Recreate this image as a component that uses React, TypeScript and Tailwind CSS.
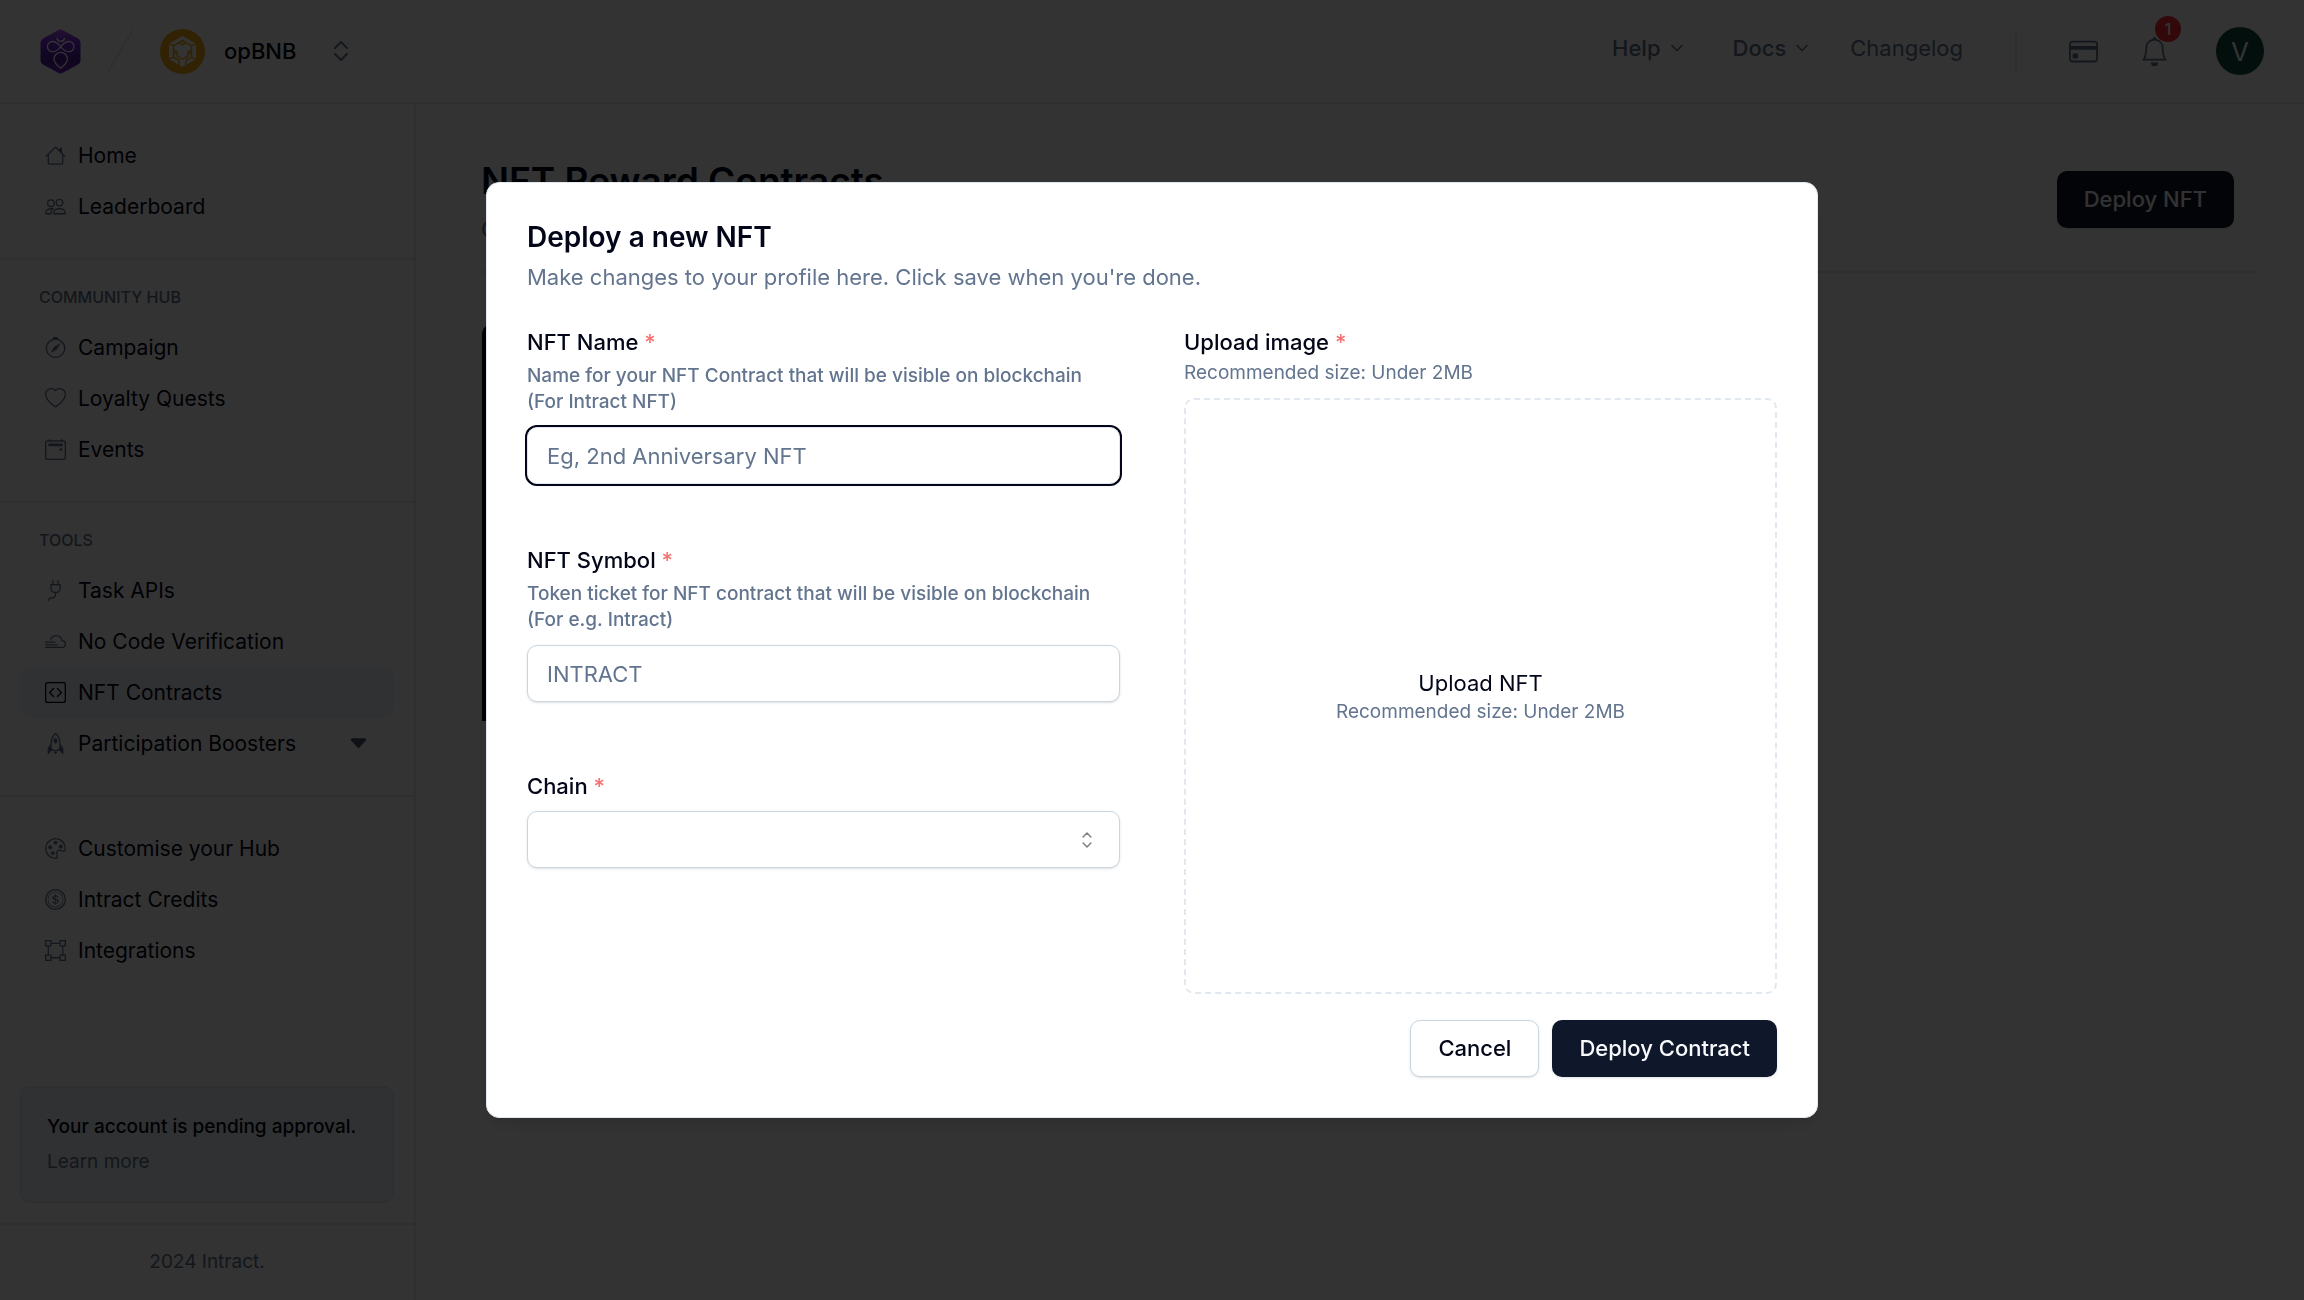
import type { ReactNode } from "react";
import { ChevronDown } from "lucide-react";
import {
  BsBell,
  BsBoundingBox,
  BsCalendar2Event,
  BsCaretDownFill,
  BsCloudFog2,
  BsCodeSquare,
  BsCoin,
  BsCompass,
  BsCreditCard,
  BsHeart,
  BsHouse,
  BsPalette,
  BsPeople,
  BsPlug,
  BsRocket,
} from "react-icons/bs";
import type { IconType } from "react-icons";

type NavItem = { label: string; icon: IconType; active?: boolean; expandable?: boolean };

const NAV_SECTIONS: { title?: string; items: NavItem[] }[] = [
  {
    items: [
      { label: "Home", icon: BsHouse },
      { label: "Leaderboard", icon: BsPeople },
    ],
  },
  {
    title: "Community Hub",
    items: [
      { label: "Campaign", icon: BsCompass },
      { label: "Loyalty Quests", icon: BsHeart },
      { label: "Events", icon: BsCalendar2Event },
    ],
  },
  {
    title: "Tools",
    items: [
      { label: "Task APIs", icon: BsPlug },
      { label: "No Code Verification", icon: BsCloudFog2 },
      { label: "NFT Contracts", icon: BsCodeSquare, active: true },
      { label: "Participation Boosters", icon: BsRocket, expandable: true },
    ],
  },
  {
    items: [
      { label: "Customise your Hub", icon: BsPalette },
      { label: "Intract Credits", icon: BsCoin },
      { label: "Integrations", icon: BsBoundingBox },
    ],
  },
];

function IntractLogo() {
  return (
    <svg width="41" height="45" viewBox="0 0 41 45" fill="none">
      <defs>
        <linearGradient id="hex" x1="20" y1="0" x2="20" y2="45" gradientUnits="userSpaceOnUse">
          <stop stopColor="#a855f7" />
          <stop offset="0.35" stopColor="#6d28d9" />
          <stop offset="0.7" stopColor="#4c1d95" />
          <stop offset="1" stopColor="#7e22ce" />
        </linearGradient>
      </defs>
      <path
        d="M18 1.2a5 5 0 0 1 5 0l15 8.3a5 5 0 0 1 2.5 4.3v17.4a5 5 0 0 1-2.5 4.3l-15 8.3a5 5 0 0 1-5 0l-15-8.3A5 5 0 0 1 .5 31.2V13.8A5 5 0 0 1 3 9.5z"
        fill="url(#hex)"
      />
      <g stroke="#fff" strokeWidth="1.3" strokeLinecap="round" strokeLinejoin="round">
        <path d="M17 9.5c1 3.8 6.5 3.8 7.5 0" />
        <path d="M20.7 17.8c-2.5-3.2-5-5.3-8.2-5.3a5 5 0 0 0 0 10.200c3.2 0 5.7-2 8.2-4.9 2.5-3.2 5-5.3 8.2-5.3a5 5 0 0 1 0 10.2c-3.2 0-5.7-2-8.2-4.9z" />
        <path d="M20.7 39.2c-3.5-2.7-6.7-5.7-6.7-9.2a6.7 6.7 0 0 1 13.4 0c0 3.5-3.2 6.5-6.7 9.2z" />
      </g>
    </svg>
  );
}

function BnbLogo() {
  return (
    <svg width="45" height="45" viewBox="0 0 45 45" fill="none">
      <circle cx="22.5" cy="22.5" r="22.5" fill="#eea80c" />
      <path d="M22.5 7l13.500 7.7v15.6l-13.500 7.7L9 30.300V14.7z" fill="#fff" />
      <g stroke="#eea80c" strokeWidth="1.5" strokeLinejoin="round">
        <path d="M22.5 11.5l3.500 2.200-3.500 2.200-3.500-2.200z" />
        <path d="M19 13.7l-5.500 3.200v4l3.500 2v4l5.500 3.300 5.500-3.300v-4l3.500-2v-4L26 13.7" />
        <path d="M13.5 20.9v7.200l5.500 3.200v5M31.5 20.9v7.200L26 31.3v5" />
        <path d="M13.5 16.9l-4.500-2M31.5 16.9l4.500-2M13.5 28.1l-4.500 2M31.5 28.1l4.500 2" />
        <path d="M17 22.9l-3.500 2M28 22.9l3.500 2" />
      </g>
      <path d="M17.5 18l5 2.900 5-2.900v3.400l-3.200 1.900v5.200l-1.800 1.100-1.800-1.100v-5.200l-3.200-1.900z" fill="#fff" />
    </svg>
  );
}

function Header() {
  return (
    <header className="flex h-[104px] items-center border-b-2 border-slate-200 px-10">
      <div className="flex items-center gap-[27px]">
        <IntractLogo />
        <svg width="25" height="42" viewBox="0 0 25 42" fill="none">
          <path d="M1 41L24 1" stroke="#e2e8f0" strokeWidth="2" strokeLinecap="round" />
        </svg>
        <button className="flex items-center text-[22px] font-medium text-slate-950">
          <BnbLogo />
          <span className="ml-[19px]">opBNB</span>
          <svg className="ml-9" width="18" height="22" viewBox="0 0 18 22" fill="none">
            <path
              d="M3 8l6-6 6 6M3 14l6 6 6-6"
              stroke="#64748b"
              strokeWidth="2"
              strokeLinecap="round"
              strokeLinejoin="round"
            />
          </svg>
        </button>
      </div>

      <nav className="ml-auto flex items-center gap-[38px] pb-[6px] text-[22px] text-slate-500">
        <button className="mr-2 flex items-center gap-[6px] font-medium">
          Help
          <ChevronDown size={20} />
        </button>
        <button className="flex items-center gap-[6px] font-medium">
          Docs
          <ChevronDown size={20} />
        </button>
        <a href="#changelog">Changelog</a>
      </nav>

      <div className="mx-[52px] h-[42px] w-0.5 bg-slate-200" />

      <div className="flex items-center gap-[42px] text-slate-500">
        <button aria-label="Billing">
          <BsCreditCard size={29} />
        </button>
        <button aria-label="Notifications" className="relative">
          <BsBell size={29} />
          <span className="absolute -top-[21px] left-[15px] flex h-[26px] w-[26px] items-center justify-center rounded-full bg-red-500 text-base font-medium text-white">
            1
          </span>
        </button>
        <button className="ml-[5px] flex h-12 w-12 items-center justify-center rounded-full bg-[#0f4b41] text-[26px] text-white">
          V
        </button>
      </div>
    </header>
  );
}

function SidebarLink({ item }: { item: NavItem }) {
  const Icon = item.icon;
  return (
    <a
      href="#"
      className={`flex h-[51px] items-center gap-3 rounded-[10px] px-[25px] text-[21px] text-slate-950 ${
        item.active ? "bg-slate-100" : ""
      }`}
    >
      <Icon size={21} className={item.active ? "text-slate-950" : "text-slate-500"} />
      {item.label}
      {item.expandable && <BsCaretDownFill size={21} className="ml-auto text-slate-600" />}
    </a>
  );
}

function Sidebar() {
  return (
    <aside className="flex w-[416px] shrink-0 flex-col border-r-2 border-slate-200">
      <div className="divide-y-2 divide-slate-200">
        {NAV_SECTIONS.map((section, i) => (
          <div key={i} className="px-5 py-[26px]">
            {section.title && (
              <h2 className="mb-[14px] pl-[19px] text-base font-medium uppercase leading-[22px] text-slate-500">
                {section.title}
              </h2>
            )}
            {section.items.map((item) => (
              <SidebarLink key={item.label} item={item} />
            ))}
          </div>
        ))}
      </div>

      <div className="mx-5 mb-5 mt-auto rounded-[10px] border-2 border-slate-200 bg-slate-100 px-[25px] pb-[26px] pt-[26px] text-[19px] leading-[26px]">
        <p className="font-medium text-slate-950">Your account is pending approval.</p>
        <a href="#" className="mt-[9px] block text-slate-500">
          Learn more
        </a>
      </div>

      <footer className="flex h-[77px] items-center justify-center border-t-2 border-slate-200 text-[19px] text-slate-500">
        2024 Intract.
      </footer>
    </aside>
  );
}

function ContractsPage() {
  return (
    <main className="flex-1 pl-[65px] pr-11">
      <div className="flex items-start justify-between border-b-2 border-slate-200 pb-[26px] pr-[26px] pt-[53px]">
        <div>
          <h1 className="text-[37px] font-semibold leading-[48px] text-slate-950">NFT Reward Contracts</h1>
          <p className="mt-2 text-[22px] leading-8 text-slate-500">Our</p>
        </div>
        <button className="mt-[14px] h-[57px] rounded-[10px] bg-slate-900 px-[27px] text-[22px] font-medium text-slate-50 shadow">
          Deploy NFT
        </button>
      </div>

      <div className="mt-[49px] w-[396px] overflow-hidden rounded-[13px] border border-slate-200">
        <div className="h-[398px] bg-black" />
        <div className="h-[145px]" />
      </div>
    </main>
  );
}

function FieldLabel({ htmlFor, children }: { htmlFor: string; children: ReactNode }) {
  return (
    <label htmlFor={htmlFor} className="block text-[22px] font-medium leading-[22px] text-slate-950">
      {children} <span className="text-[#f87171]">*</span>
    </label>
  );
}

const inputClass =
  "block h-[57px] w-full rounded-[10px] border border-slate-300 bg-white px-[19px] text-[22px] text-slate-950 shadow-sm outline-none placeholder:text-slate-500 focus:border-slate-200 focus:ring-2 focus:ring-slate-950";

function DeployDialog() {
  return (
    <div className="fixed inset-0 flex items-center justify-center bg-black/80">
      <form
        role="dialog"
        aria-labelledby="dialog-title"
        className="w-full max-w-[1332px] rounded-[13px] border border-slate-200 bg-white p-10 shadow-lg"
      >
        <h2 id="dialog-title" className="text-[28px] font-semibold leading-[28px] text-slate-950">
          Deploy a new NFT
        </h2>
        <p className="mt-[10px] text-[22px] leading-8 text-slate-500">
          Make changes to your profile here. Click save when you're done.
        </p>

        <div className="mt-[38px] grid grid-cols-2 gap-16">
          <div>
            <FieldLabel htmlFor="name">NFT Name</FieldLabel>
            <p className="mb-3 mt-[10px] text-[19px] font-medium leading-[26px] text-slate-500">
              Name for your NFT Contract that will be visible on blockchain (For Intract NFT)
            </p>
            <input id="name" autoFocus placeholder="Eg, 2nd Anniversary NFT" className={inputClass} />

            <div className="mt-[65px]">
              <FieldLabel htmlFor="symbol">NFT Symbol</FieldLabel>
              <p className="mb-3 mt-[10px] text-[19px] font-medium leading-[26px] text-slate-500">
                Token ticket for NFT contract that will be visible on blockchain (For e.g. Intract)
              </p>
              <input id="symbol" placeholder="INTRACT" className={inputClass} />
            </div>

            <div className="mt-[73px]">
              <FieldLabel htmlFor="chain">Chain</FieldLabel>
              <div className="relative mt-[14px]">
                <select id="chain" defaultValue="" className={`${inputClass} appearance-none`}>
                  <option value="" />
                </select>
                <svg
                  className="pointer-events-none absolute right-5 top-1/2 -translate-y-1/2 opacity-50"
                  width="26"
                  height="26"
                  viewBox="0 0 15 15"
                  fill="none"
                >
                  <path
                    d="M5.25 5.75L7.5 3.5l2.25 2.25M5.25 9.25L7.5 11.5l2.25-2.25"
                    stroke="#020617"
                    strokeWidth="0.9"
                    strokeLinecap="round"
                    strokeLinejoin="round"
                  />
                </svg>
              </div>
            </div>
          </div>

          <div>
            <FieldLabel htmlFor="image">Upload image</FieldLabel>
            <p className="mt-[7px] text-[19px] leading-[26px] text-slate-500">Recommended size: Under 2MB</p>
            <label
              htmlFor="image"
              className="mt-3 flex h-[596px] flex-col items-center justify-center rounded-[10px] border-2 border-dashed border-slate-200"
            >
              <span className="text-[22px] leading-8 text-slate-950">Upload NFT</span>
              <span className="text-[19px] leading-[26px] text-slate-500">Recommended size: Under 2MB</span>
              <input id="image" type="file" accept="image/*" className="sr-only" />
            </label>
          </div>
        </div>

        <div className="mt-[26px] flex justify-end gap-[13px]">
          <button
            type="button"
            className="h-[57px] rounded-[10px] border border-slate-300 bg-white px-[27px] text-[22px] font-medium text-slate-950 shadow-sm"
          >
            Cancel
          </button>
          <button
            type="submit"
            className="h-[57px] rounded-[10px] bg-slate-900 px-[27px] text-[22px] font-medium text-slate-50 shadow"
          >
            Deploy Contract
          </button>
        </div>
      </form>
    </div>
  );
}

export default function App() {
  return (
    <div className="flex min-h-screen flex-col bg-white font-['Inter',sans-serif]">
      <Header />
      <div className="flex flex-1">
        <Sidebar />
        <ContractsPage />
      </div>
      <DeployDialog />
    </div>
  );
}
